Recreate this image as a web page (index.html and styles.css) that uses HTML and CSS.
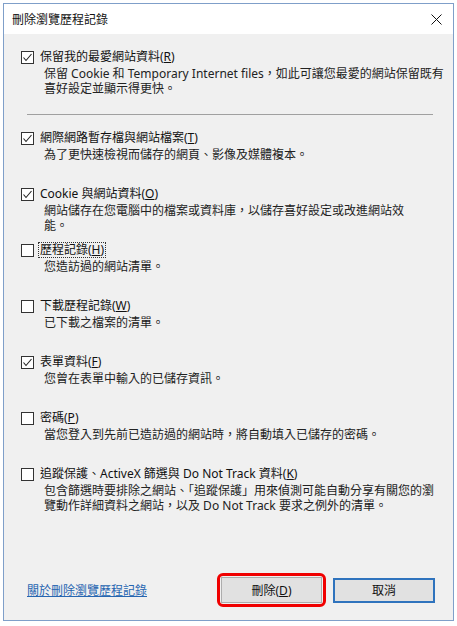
FILE: index.html
```html
<!DOCTYPE html>
<html lang="zh-Hant">
<head>
<meta charset="utf-8">
<title>刪除瀏覽歷程記錄</title>
<link rel="stylesheet" href="styles.css">
</head>
<body>
<div class="window">
  <div class="titlebar">
    <span class="title">刪除瀏覽歷程記錄</span>
    <svg class="close" width="11" height="11" viewBox="0 0 11 11"><path d="M0.5 0.5 L10.5 10.5 M10.5 0.5 L0.5 10.5" stroke="#111" stroke-width="1" fill="none"/></svg>
  </div>
  <div class="content">
    <div class="first">
      <div class="label"><span class="cb checked"><svg width="13" height="13" viewBox="0 0 13 13"><path d="M2.5 6.5 L5 9.5 L10.5 3" stroke="#222" stroke-width="1.1" fill="none"/></svg></span><span class="lt">保留我的最愛網站資料(<u>R</u>)</span></div>
      <div class="desc">保留 Cookie 和 Temporary Internet files，如此可讓您最愛的網站保留既有<br>喜好設定並顯示得更快。</div>
    </div>
    <div class="sep"></div>
    <div class="items">
      <div class="item">
        <div class="label"><span class="cb checked"><svg width="13" height="13" viewBox="0 0 13 13"><path d="M2.5 6.5 L5 9.5 L10.5 3" stroke="#222" stroke-width="1.1" fill="none"/></svg></span><span class="lt">網際網路暫存檔與網站檔案(<u>T</u>)</span></div>
        <div class="desc">為了更快速檢視而儲存的網頁、影像及媒體複本。</div>
      </div>
      <div class="item">
        <div class="label"><span class="cb checked"><svg width="13" height="13" viewBox="0 0 13 13"><path d="M2.5 6.5 L5 9.5 L10.5 3" stroke="#222" stroke-width="1.1" fill="none"/></svg></span><span class="lt">Cookie 與網站資料(<u>O</u>)</span></div>
        <div class="desc">網站儲存在您電腦中的檔案或資料庫，以儲存喜好設定或改進網站效<br>能。</div>
      </div>
      <div class="item">
        <div class="label"><span class="cb"></span><span class="lt focus">歷程記錄(<u>H</u>)</span></div>
        <div class="desc">您造訪過的網站清單。</div>
      </div>
      <div class="item">
        <div class="label"><span class="cb"></span><span class="lt">下載歷程記錄(<u>W</u>)</span></div>
        <div class="desc">已下載之檔案的清單。</div>
      </div>
      <div class="item">
        <div class="label"><span class="cb checked"><svg width="13" height="13" viewBox="0 0 13 13"><path d="M2.5 6.5 L5 9.5 L10.5 3" stroke="#222" stroke-width="1.1" fill="none"/></svg></span><span class="lt">表單資料(<u>F</u>)</span></div>
        <div class="desc">您曾在表單中輸入的已儲存資訊。</div>
      </div>
      <div class="item">
        <div class="label"><span class="cb"></span><span class="lt">密碼(<u>P</u>)</span></div>
        <div class="desc">當您登入到先前已造訪過的網站時，將自動填入已儲存的密碼。</div>
      </div>
      <div class="item">
        <div class="label"><span class="cb"></span><span class="lt">追蹤保護、ActiveX 篩選與 Do Not Track 資料(<u>K</u>)</span></div>
        <div class="desc">包含篩選時要排除之網站、「追蹤保護」用來偵測可能自動分享有關您的瀏<br>覽動作詳細資料之網站，以及 Do Not Track 要求之例外的清單。</div>
      </div>
    </div>
    <div class="footer">
      <a class="link" href="#">關於刪除瀏覽歷程記錄</a>
      <div class="buttons">
        <button class="btn delete">刪除(<u>D</u>)</button>
        <button class="btn cancel">取消</button>
      </div>
    </div>
  </div>
</div>
</body>
</html>
```
FILE: styles.css
```css
html, body {
  margin: 0;
  padding: 0;
  background: #ffffff;
}
body {
  font-family: "Segoe UI", "Noto Sans", "Noto Sans CJK TC", sans-serif;
  font-size: 12px;
  color: #1a1a1a;
}
.window {
  margin: 3px 0 0 3px;
  width: 449px;
  height: 616px;
  border: 1px solid #7f9fc9;
  display: flex;
  flex-direction: column;
  background: #f0f0f0;
}
.titlebar {
  height: 30px;
  background: #ffffff;
  display: flex;
  align-items: center;
  justify-content: space-between;
  padding: 0 11px 0 8px;
  flex: none;
}
.title {
  font-family: "Noto Sans CJK TC", sans-serif;
  font-size: 12px;
  line-height: 16px;
  color: #111;
}
.close {
  display: block;
  margin-top: 1px;
}
.content {
  flex: 1;
  display: flex;
  flex-direction: column;
  padding: 14px 18px 17px 17px;
}
.label {
  display: flex;
  align-items: center;
  height: 18px;
  line-height: 16px;
  white-space: nowrap;
}
.cb {
  width: 11px;
  height: 11px;
  border: 1px solid #333;
  background: #fff;
  position: relative;
  flex: none;
  margin-right: 4px;
}
.cb svg {
  position: absolute;
  left: -1px;
  top: -1px;
}
.lt {
  color: #111;
  padding: 0 1px;
  border: 1px solid transparent;
  line-height: 14px;
}
.lt.focus {
  border: 1px dotted #333;
}
.desc {
  margin-left: 23px;
  line-height: 15px;
  white-space: nowrap;
  color: #222;
}
.sep {
  height: 1px;
  background: #a0a0a0;
  margin: 18px 2px 14px 6px;
  width: 406px;
}
.item {
  height: 56px;
}
.footer {
  margin-top: auto;
  display: flex;
  align-items: center;
  justify-content: space-between;
  padding-left: 6px;
}
.link {
  color: #2665b0;
  text-decoration: underline;
  font-family: "Noto Sans CJK TC", sans-serif;
  font-size: 12px;
  line-height: 16px;
}
.buttons {
  display: flex;
  gap: 11px;
  align-items: center;
}
.btn {
  font-family: "Segoe UI", "Noto Sans", "Noto Sans CJK TC", sans-serif;
  font-size: 12px;
  color: #111;
  width: 101px;
  height: 26px;
  background: #e1e1e1;
  border: 1px solid #adadad;
  padding: 0;
  position: relative;
}
.btn.cancel {
  border: 2px solid #2f73bd;
  width: 102px;
  height: 25px;
}
.btn.delete::after {
  content: "";
  position: absolute;
  left: -5px;
  top: -5px;
  right: -5px;
  bottom: -5px;
  border: 3px solid #f00000;
  border-radius: 6px;
}
```
